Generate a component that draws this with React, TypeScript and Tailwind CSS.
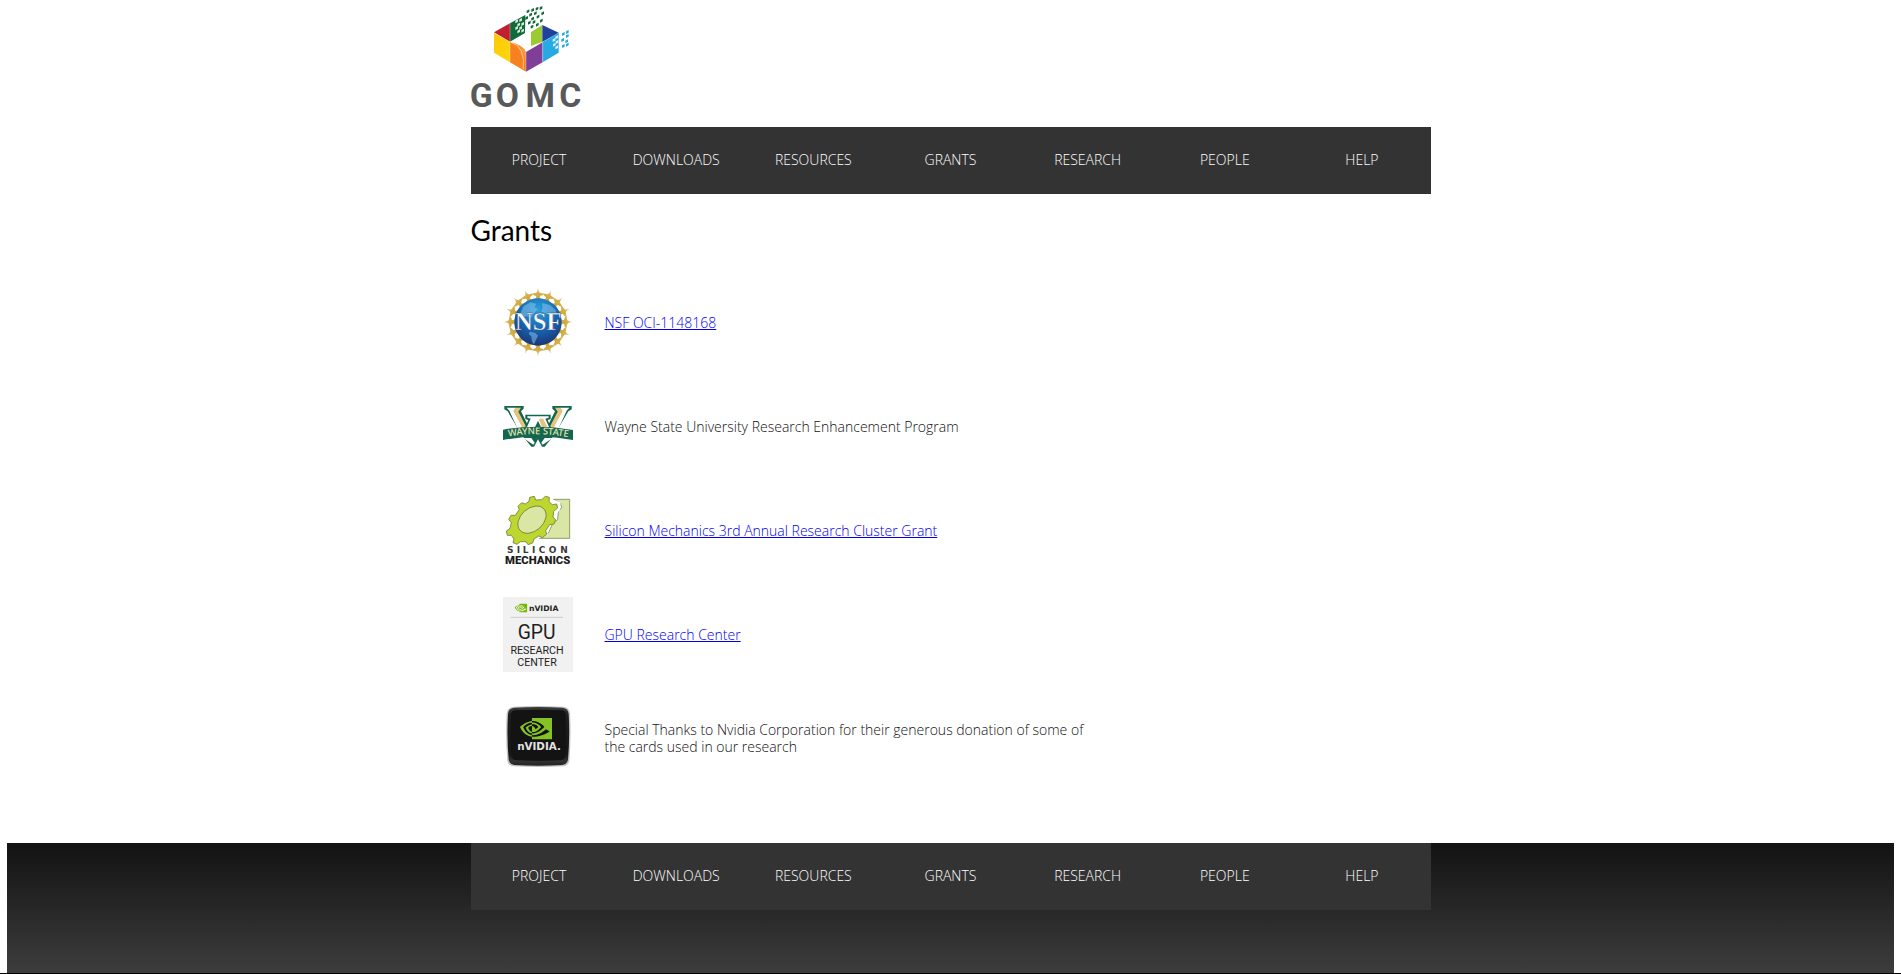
import type { ReactNode } from "react";
import { SiNvidia } from "react-icons/si";

const NAV_ITEMS = ["PROJECT", "DOWNLOADS", "RESOURCES", "GRANTS", "RESEARCH", "PEOPLE", "HELP"];

function NavBar({ label }: { label: string }) {
  return (
    <nav aria-label={label} className="mx-auto w-full max-w-[960px] bg-[#333333]">
      <ul className="grid h-[67px] grid-cols-7 items-center pb-0.5 text-center text-sm text-white">
        {NAV_ITEMS.map((item) => (
          <li key={item}>
            <a href={`#${item.toLowerCase()}`}>{item}</a>
          </li>
        ))}
      </ul>
    </nav>
  );
}

const GREEN_BITS = [
  [204, 34], [218, 30], [231, 26], [243, 24], [212, 44], [226, 40], [248, 40], [200, 54], [218, 56], [234, 50],
  [208, 68], [222, 66], [244, 62], [216, 80], [232, 74],
];
const WHITE_BITS = [
  [170, 64], [182, 60], [176, 74], [188, 72], [170, 84], [182, 84], [176, 94], [188, 92],
];
const BLUE_BITS = [
  [322, 96], [310, 102], [322, 108], [308, 120], [320, 124], [310, 138], [322, 134],
];
const PALE_BITS = [
  [290, 112], [282, 120], [291, 126], [283, 134], [290, 142],
];

function bits(points: number[][], fill: string) {
  return points.map(([x, y]) => (
    <path key={`${x}-${y}`} fill={fill} d={`M${x - 4} ${y - 2}l8-4v8l-8 4z`} />
  ));
}

function GomcLogo() {
  return (
    <svg role="img" aria-label="GOMC" viewBox="33 0 330 330" className="h-[110px] w-[110px] overflow-visible">
      <defs>
        <linearGradient id="cube-yellow" x1="0" y1="0" x2="1" y2="1">
          <stop offset="0" stopColor="#fbc90c" />
          <stop offset="1" stopColor="#ffd60a" />
        </linearGradient>
        <linearGradient id="cube-orange" x1="0" y1="1" x2="1" y2="0">
          <stop offset="0.6" stopColor="#f5821f" />
          <stop offset="1" stopColor="#fbb36b" />
        </linearGradient>
      </defs>
      <path fill="#c01f2f" d="M102 97l48-27v55z" />
      <path fill="#12693a" d="M150 70l46-25-1 54-45 26z" />
      <path fill="#9acb32" d="M213 96l33-20v50l-33 12z" />
      <path fill="#20409a" d="M247 75l49 23-49 28z" />
      <path fill="url(#cube-yellow)" d="M102 99l48 27v61l-48-29z" />
      <path fill="url(#cube-orange)" d="M150 126q42 10 48 30v59l-48-28z" />
      <path fill="none" stroke="#fde3c4" strokeWidth="2" d="M152 127q44 10 38 80" />
      <path fill="#7f3f98" d="M198 156l50-29v60l-50 28z" />
      <path fill="#27a9e1" d="M248 127l48-29v60l-48 29z" />
      <path stroke="#fff" strokeWidth="1.5" fill="none" d="M150 70v117M198 156v59M248 127v60" opacity="0.6" />
      {bits(GREEN_BITS, "#12693a")}
      {bits(WHITE_BITS, "#d4eadb")}
      {bits(BLUE_BITS, "#27a9e1")}
      {bits(PALE_BITS, "#d9f1fb")}
      <text
        x="64 142 241 331"
        y="322"
        textAnchor="middle"
        fontFamily="Roboto, sans-serif"
        fontWeight="700"
        fontSize="101"
        fill="#58595b"
      >
        GOMC
      </text>
    </svg>
  );
}

const SPOKES = Array.from({ length: 16 }, (_, i) => i * 22.5);

function NsfLogo() {
  return (
    <svg role="img" aria-label="National Science Foundation" viewBox="39 24 210 210" className="h-[70px] w-[70px]">
      <defs>
        <radialGradient id="globe" cx="0.5" cy="0.25" r="0.8">
          <stop offset="0" stopColor="#2b9fe0" />
          <stop offset="0.5" stopColor="#1668b4" />
          <stop offset="1" stopColor="#1c2f70" />
        </radialGradient>
        <linearGradient id="gold" x1="0" y1="0" x2="0" y2="1">
          <stop offset="0" stopColor="#dcc06a" />
          <stop offset="1" stopColor="#c79b28" />
        </linearGradient>
      </defs>
      {SPOKES.map((angle) => (
        <path
          key={angle}
          fill="url(#gold)"
          transform={`rotate(${angle} 144 129)`}
          d="M144 26q1 12 5 15l13 3-3 4-9 3-1 4q2 5 12 8l-2 4h-30l-2-4q10-3 12-8l-1-4-9-3-3-4 13-3q4-3 5-15z"
        />
      ))}
      <circle cx="144" cy="129" r="71" fill="url(#globe)" />
      <g fill="#8ecbed" opacity="0.5">
        <path d="M100 82l22-12 16 4-4 12 10 4-12 12-10 14-10-4-14 2-6-12z" />
        <path d="M156 72l24 6 16 14 6 14-14-4-8 8-14-8-12-4 4-12z" />
        <path d="M120 158l16 4 8 8-6 12-6 14-6-8-2-16-8-8z" />
      </g>
      <text
        x="145"
        y="153"
        textAnchor="middle"
        fontFamily="'Liberation Serif', serif"
        fontWeight="700"
        fontSize="74"
        fill="#ffffff"
        stroke="#25406f"
        strokeWidth="1"
      >
        NSF
      </text>
    </svg>
  );
}

function WayneStateLogo() {
  return (
    <svg role="img" aria-label="Wayne State" viewBox="39 47 210 126" className="h-[42px] w-[70px]">
      <defs>
        <path id="banner-line" d="M43 144Q144 124 247 146" />
      </defs>
      <path fill="#14664f" d="M43 50h58v8l-8 8 28 56h46l28-56-8-8v-8h58v10l-10 6-40 68-31 38h-8l-12-22-12 22h-8l-31-38-40-68-10-6z" />
      <path fill="#ffffff" d="M50 55h28l-7 10 34 60H86L58 64zM238 55h-28l7 10-34 60h19l28-61z" />
      <path fill="#e5c47f" d="M76 55h17l-8 12 30 58h-13L71 66zM212 55h-17l8 12-30 58h13l31-59z" />
      <path fill="#14664f" d="M106 76h76v13l-9 3 14 32h-86l14-32-9-3z" />
      <path fill="#ffffff" d="M112 81h64v4l-10 3 16 36h-76l16-36-10-3z" />
      <path fill="#e5c47f" d="M146 88h14l18 36h-18z" />
      <path fill="#14664f" d="M130 124l14-30 14 30z" />
      <path fill="#ffffff" d="M100 146h24l10 14-4 6zM188 146h-24l-10 14 4 6z" />
      <path fill="#14664f" d="M39 121Q144 103 249 122v30Q144 133 39 152z" />
      <text fontFamily="'Noto Sans', sans-serif" fontWeight="500" fontSize="28" fill="#e9e4b0" textAnchor="middle">
        <textPath href="#banner-line" startOffset="50%">WAYNE STATE</textPath>
      </text>
    </svg>
  );
}

function SiliconMechanicsLogo() {
  return (
    <svg role="img" aria-label="Silicon Mechanics" viewBox="39 30 210 213" className="h-[71px] w-[70px]">
      <path fill="#d9e6a4" stroke="#7c8a5a" strokeWidth="2.5" d="M190 43h49v117h-92l28-16 12-26 16-14 2-24 10-12-4-14z" />
      <path fill="none" stroke="#ffffff" strokeWidth="7" d="M186 46l22 8-2 20-10 10-2 22-14 12-10 26-28 16" />
      <path
        fill="#bdd630"
        stroke="#747f3a"
        strokeWidth="2.5"
        strokeLinejoin="round"
        d="M117 49l2-12 14-3 4 11 18-1 11-10 12 3-1 13 10 9 13-2 3 12-12 10-2 18 8 7-5 13-13 2-12 18 3 10-13 11-11-5-14 9-4 12-14 5-6-9-17 0-10 8-12-5 3-11-8-11-12 0-3-13 11-8 4-17-8-10 7-12 13 0 12-18-4-9 11-11 11 4z"
      />
      <ellipse cx="126" cy="104" rx="48" ry="34" transform="rotate(-42 126 104)" fill="#d9e6a4" stroke="#747f3a" strokeWidth="2.5" />
      <text
        x="61 85 107 131 156 188 222"
        y="204"
        textAnchor="middle"
        fontFamily="'DejaVu Sans', sans-serif"
        fontWeight="700"
        fontSize="27"
        fill="#3a3a3a"
      >
        SILICON
      </text>
      <text
        x="143"
        y="237"
        textAnchor="middle"
        fontFamily="Roboto, sans-serif"
        fontWeight="900"
        fontSize="34"
        fill="#1d1d1d"
      >
        MECHANICS
      </text>
    </svg>
  );
}

function GpuCenterLogo() {
  return (
    <svg role="img" aria-label="NVIDIA GPU Research Center" viewBox="39 36 210 225" className="h-[75px] w-[70px]">
      <path fill="#f1f1f1" d="M39 36h210v225H39z" />
      <SiNvidia x={74} y={50} size={38} color="#76b900" />
      <path stroke="#cccccc" strokeWidth="3" d="M62 97h157" />
      <g fontFamily="Roboto, sans-serif" textAnchor="middle" fill="#1f1f1f" fontWeight="400">
        <text x="161" y="78" fontFamily="'DejaVu Sans', sans-serif" fontWeight="700" fontSize="23">
          nVIDIA
        </text>
        <text x="140" y="162" fontSize="58">GPU</text>
        <text x="141" y="206" fontSize="32">RESEARCH</text>
        <text x="141" y="242" fontSize="32">CENTER</text>
      </g>
    </svg>
  );
}

function NvidiaBadge() {
  return (
    <svg role="img" aria-label="NVIDIA" viewBox="39 30 210 210" className="h-[70px] w-[70px]">
      <defs>
        <linearGradient id="badge" x1="0" y1="0" x2="0" y2="1">
          <stop offset="0" stopColor="#3c3c3c" />
          <stop offset="0.15" stopColor="#1f1f1f" />
          <stop offset="0.8" stopColor="#161616" />
          <stop offset="0.92" stopColor="#333333" />
          <stop offset="1" stopColor="#222222" />
        </linearGradient>
      </defs>
      <path fill="#8a8a8a" opacity="0.5" d="M70 41q75-4 150 0 18 2 20 20 4 70-2 142-3 16-18 17-75 4-150 0-15-1-18-17-6-72-2-142 2-18 20-20z" />
      <path fill="url(#badge)" d="M72 44q73-4 146 0 16 2 18 18 4 69-2 138-3 15-17 16-72 4-144 0-14-1-17-16-6-69-2-138 2-16 18-18z" />
      <path fill="#131313" d="M74 52q71-4 142 0 10 2 11 12 3 60-1 126-2 10-11 11-70 4-140 0-9-1-11-11-4-66-1-126 1-10 11-12z" />
      <SiNvidia x={90} y={59} size={96} color="#84c225" />
      <text
        x="147"
        y="171"
        textAnchor="middle"
        fontFamily="'DejaVu Sans', sans-serif"
        fontWeight="700"
        fontSize="31"
        fill="#e4e4e4"
      >
        nVIDIA.
      </text>
    </svg>
  );
}

type Grant = { logo: ReactNode; text: string; href?: string };

const GRANTS: Grant[] = [
  { logo: <NsfLogo />, text: "NSF OCI-1148168", href: "#nsf" },
  { logo: <WayneStateLogo />, text: "Wayne State University Research Enhancement Program" },
  { logo: <SiliconMechanicsLogo />, text: "Silicon Mechanics 3rd Annual Research Cluster Grant", href: "#silicon-mechanics" },
  { logo: <GpuCenterLogo />, text: "GPU Research Center", href: "#gpu-research-center" },
  {
    logo: <NvidiaBadge />,
    text: "Special Thanks to Nvidia Corporation for their generous donation of some of the cards used in our research",
  },
];

export default function App() {
  return (
    <div className="flex min-h-screen flex-col bg-white font-['Open_Sans',sans-serif] font-light">
      <header>
        <div className="mx-auto h-[127px] w-full max-w-[960px]">
          <a href="#home" className="inline-block">
            <GomcLogo />
          </a>
        </div>
        <NavBar label="Main" />
      </header>

      <main className="mx-auto w-full max-w-[960px] pb-[53px]">
        <h1 className="pt-4 font-['Lato',sans-serif] text-[28px] leading-10 font-normal text-black">Grants</h1>
        <table className="mt-5 text-sm leading-[17px] text-[#111111]">
          <tbody>
            {GRANTS.map((grant) => (
              <tr key={grant.text} className="h-[104px]">
                <td className="pl-8 align-middle [&>svg]:block">{grant.logo}</td>
                <td className="w-[520px] pl-8 align-middle">
                  {grant.href ? (
                    <a href={grant.href} className="text-[#0000ee] underline">
                      {grant.text}
                    </a>
                  ) : (
                    grant.text
                  )}
                </td>
              </tr>
            ))}
          </tbody>
        </table>
      </main>

      <footer className="flex flex-1 flex-col border-b border-black">
        <div className="mx-[7px] flex-1 bg-linear-to-b from-[#131313] to-[#3d3d3d] pb-[62px]">
          <NavBar label="Footer" />
        </div>
      </footer>
    </div>
  );
}
